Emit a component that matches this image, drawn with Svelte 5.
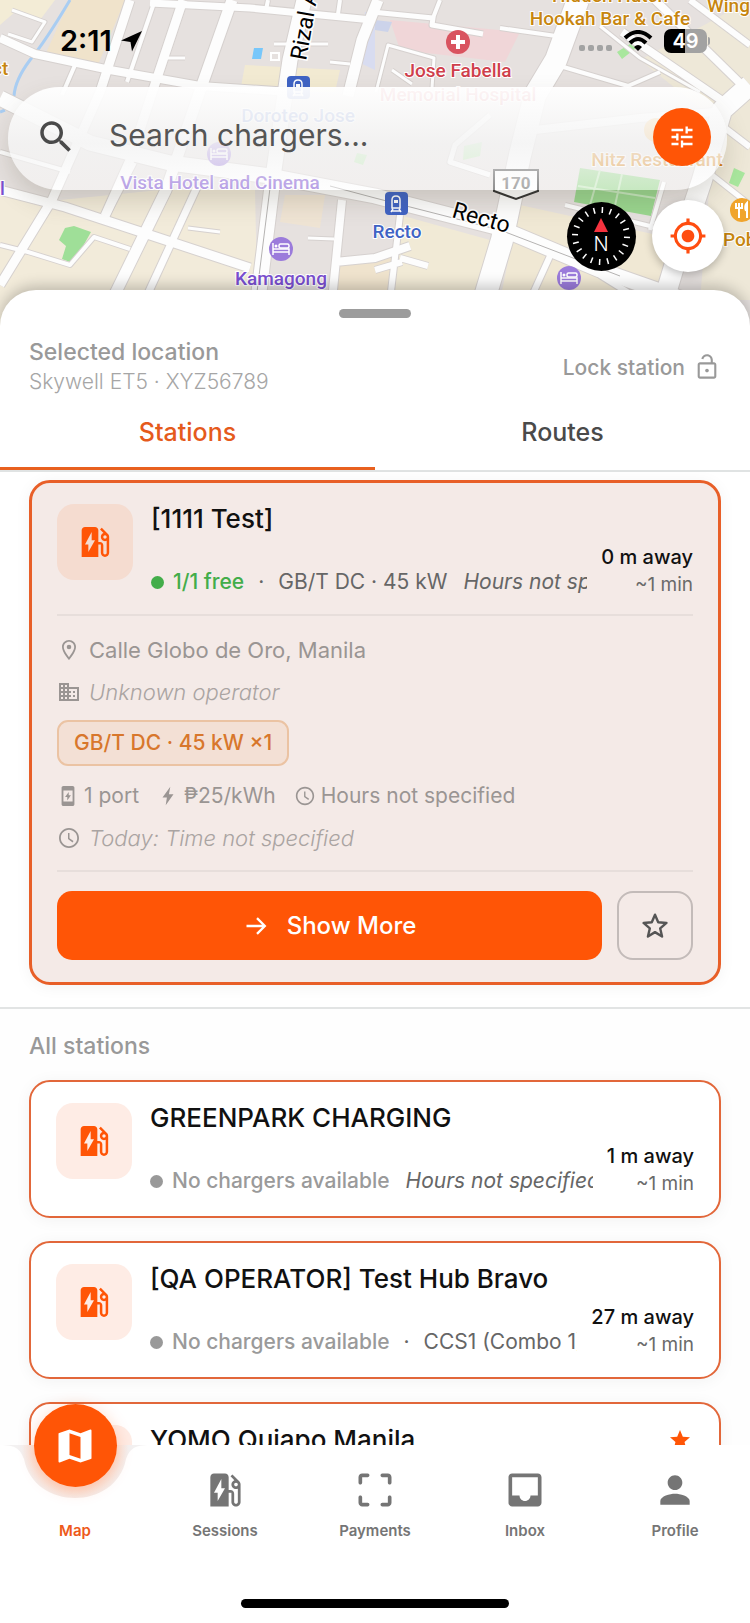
<script>
	const icons = {
		search: "M15.5 14h-.79l-.28-.27C15.41 12.59 16 11.11 16 9.5 16 5.91 13.09 3 9.5 3S3 5.91 3 9.5 5.91 16 9.5 16c1.61 0 3.09-.59 4.23-1.57l.27.28v.79l5 4.99L20.49 19l-4.99-5zm-6 0C7.01 14 5 11.99 5 9.5S7.01 5 9.5 5 14 7.01 14 9.5 11.99 14 9.5 14z",
		tune: "M3 17v2h6v-2H3zM3 5v2h10V5H3zm10 16v-2h8v-2h-8v-2h-2v6h2zM7 9v2H3v2h4v2h2V9H7zm14 4v-2H11v2h10zm-6-4h2V7h4V5h-4V3h-2v6z",
		locate: "M12 8c-2.21 0-4 1.79-4 4s1.79 4 4 4 4-1.79 4-4-1.79-4-4-4zm8.94 3A8.994 8.994 0 0 0 13 3.06V1h-2v2.06A8.994 8.994 0 0 0 3.06 11H1v2h2.06A8.994 8.994 0 0 0 11 20.94V23h2v-2.06A8.994 8.994 0 0 0 20.94 13H23v-2h-2.06zM12 19c-3.87 0-7-3.13-7-7s3.13-7 7-7 7 3.13 7 7-3.13 7-7 7z",
		lockOpen: "M12 16.600c.9 0 1.600-.7 1.600-1.600s-.7-1.600-1.600-1.600-1.600.7-1.600 1.600.7 1.600 1.600 1.600zM18 8h-1V6c0-2.760-2.240-5-5-5-2.400 0-4.400 1.600-4.900 3.900l1.800.4C9.200 3.900 10.500 2.800 12 2.800c1.770 0 3.200 1.430 3.200 3.200v2H6c-1.100 0-2 .9-2 2v10c0 1.100.9 2 2 2h12c1.100 0 2-.9 2-2V10c0-1.100-.9-2-2-2zm.2 12.200H5.800V9.800h12.400v10.400z",
		pump: "M19.77 7.23l.01-.01-3.72-3.72L15 4.56l2.11 2.11c-.94.36-1.61 1.26-1.61 2.33 0 1.38 1.12 2.5 2.5 2.5.36 0 .69-.08 1-.21v7.21c0 .55-.45 1-1 1s-1-.45-1-1V14c0-1.1-.9-2-2-2h-1V5c0-1.1-.9-2-2-2H6c-1.1 0-2 .9-2 2v16h10v-7.5h1.5v5c0 1.38 1.12 2.5 2.5 2.5s2.5-1.12 2.5-2.5V9c0-.69-.28-1.32-.73-1.77zM18 10c-.55 0-1-.45-1-1s.45-1 1-1 1 .45 1 1-.45 1-1 1zM8 18v-4.5H6L10 6v5h2l-4 7z",
		pin: "M12 2C8.13 2 5 5.13 5 9c0 5.25 7 13 7 13s7-7.75 7-13c0-3.87-3.13-7-7-7zM6.800 9c0-2.870 2.330-5.200 5.200-5.200s5.200 2.330 5.200 5.200c0 2.880-3.080 7.500-5.200 10.200C9.920 16.500 6.800 11.850 6.800 9zm5.200-2.300a2.300 2.300 0 1 0 0 4.600 2.300 2.300 0 0 0 0-4.600z",
		building: "M12 7V3H2v18h20V7H12zM6 19H4v-2h2v2zm0-4H4v-2h2v2zm0-4H4V9h2v2zm0-4H4V5h2v2zm4 12H8v-2h2v2zm0-4H8v-2h2v2zm0-4H8V9h2v2zm0-4H8V5h2v2zm10 12h-8v-2h2v-2h-2v-2h2v-2h-2V9h8v10zm-2-8h-2v2h2v-2zm0 4h-2v2h2v-2z",
		clock: "M12 2C6.500 2 2 6.500 2 12s4.500 10 10 10 10-4.500 10-10S17.500 2 12 2zm0 18.200c-4.530 0-8.200-3.670-8.200-8.200S7.470 3.800 12 3.800s8.200 3.670 8.200 8.200-3.670 8.200-8.200 8.200zM12.500 7H11v6l4.600 3.400.9-1.300-4-2.900z",
		port: "M17 1H7c-1.100 0-2 .9-2 2v18c0 1.100.9 2 2 2h10c1.100 0 2-.9 2-2V3c0-1.100-.9-2-2-2zm0 17H7V6h10v12zm-4.200-10.500L8.800 13h2.400v3.800l4-5.500h-2.400z",
		bolt: "M14.500 2L6 13.500h4.800L9.500 22 18 10h-5z",
		arrow: "M12.700 4.600l-1.400 1.400 5 5H3v2h13.300l-5 5 1.400 1.400L20.100 12z",
		star: "M12 17.27L18.18 21l-1.64-7.03L22 9.24l-7.19-.61L12 2 9.19 8.63 2 9.24l5.46 4.73L5.82 21z",
		map: "M20.5 3l-.16.03L15 5.1 9 3 3.36 4.9c-.21.07-.36.25-.36.48V20.5c0 .28.22.5.5.5l.16-.03L9 18.9l6 2.1 5.64-1.9c.21-.07.36-.25.36-.48V3.5c0-.28-.22-.5-.5-.5zM15 19l-6-2.11V5l6 2.11V19z",
		frame: "M3 5v3c0 1.300 2 1.300 2 0V5h3c1.300 0 1.300-2 0-2H5c-1.100 0-2 .9-2 2zm2 11c0-1.300-2-1.300-2 0v3c0 1.100.9 2 2 2h3c1.300 0 1.300-2 0-2H5v-3zm14 3h-3c-1.300 0-1.300 2 0 2h3c1.100 0 2-.9 2-2v-3c0-1.300-2-1.300-2 0v3zm0-16h-3c-1.300 0-1.300 2 0 2h3v3c0 1.300 2 1.300 2 0V5c0-1.100-.9-2-2-2z",
		inbox: "M19 3H4.990c-1.110 0-1.980.89-1.980 2L3 19c0 1.100.88 2 1.990 2H19c1.100 0 2-.9 2-2V5c0-1.110-.9-2-2-2zm0 12h-4c0 1.660-1.350 3-3 3s-3-1.340-3-3H4.990V5H19v10z",
		person: "M12 12c2.210 0 4-1.790 4-4s-1.790-4-4-4-4 1.790-4 4 1.790 4 4 4zm0 2c-2.670 0-8 1.340-8 4v2h16v-2c0-2.660-5.330-4-8-4z",
		send: "M22 2L1 11.500l9.500 1.500L12 22.500z",
	};

	// white streets, drawn with a grey casing below
	const streets = [
		{ d: "M0 38L35 54L110 70L200 86L290 92", w: 8 },
		{ d: "M130 0L100 92L52 200L0 285", w: 9 },
		{ d: "M155 0L127 82", w: 4 },
		{ d: "M183 0L155 84L130 160L105 216", w: 9 },
		{ d: "M232 0L202 85L166 190L112 300", w: 11 },
		{ d: "M75 65L62 95", w: 4 },
		{ d: "M12 10L45 22L32 42L8 34", w: 3 },
		{ d: "M150 3L250 8L372 20", w: 7 },
		{ d: "M0 190L65 207L150 235L250 268", w: 9 },
		{ d: "M133 162L105 216", w: 8 },
		{ d: "M198 185L145 300", w: 7 },
		{ d: "M0 245L28 252L70 265L94 237L130 249", w: 4 },
		{ d: "M0 152L70 172", w: 4 },
		{ d: "M188 228L220 232", w: 3 },
		{ d: "M342 200L332 300M335 262L375 258L410 246", w: 8 },
		{ d: "M308 238L334 239", w: 3 },
		{ d: "M274 44L328 44M165 58L185 58M330 62L350 64", w: 3 },
		{ d: "M340 0L338 14M268 0L266 10", w: 4 },
		{ d: "M378 0L362 40L348 96", w: 11 },
		{ d: "M372 12L433 18L432 25L483 34", w: 5 },
		{ d: "M500 28L556 36M440 0L433 18", w: 4 },
		{ d: "M376 92L388 45L434 58L432 88M392 70L412 84", w: 3 },
		{ d: "M560 66L628 86L660 72", w: 4 },
		{ d: "M622 32L724 102", w: 8 },
		{ d: "M655 0L745 88", w: 8 },
		{ d: "M690 0L750 45", w: 6 },
		{ d: "M600 26L640 58L700 92", w: 3 },
		{ d: "M490 115L455 145L450 162L490 175", w: 5 },
		{ d: "M535 130L640 118L715 112", w: 8 },
		{ d: "M725 128L750 147", w: 6 },
		{ d: "M712 175L750 205", w: 5 },
		{ d: "M565 205L650 226L682 240", w: 4 },
		{ d: "M664 182L650 230", w: 4 },
		{ d: "M400 215L390 300M400 258L428 266M375 270L402 262", w: 6 },
		{ d: "M550 256L530 300M640 300L600 275", w: 6 },
		{ d: "M0 98L90 143L170 163L270 176L375 196L500 228L600 270L700 305", w: 15 },
		{ d: "M304 0L290 60L274 170L258 300", w: 15 },
		{ d: "M578 0L556 60L535 95L520 155L502 240L484 300", w: 22 },
		{ d: "M750 85L722 110L702 180L682 240L664 300", w: 20 },
	];

	const ticks = Array.from({ length: 20 }, (_, i) => i * 18);

	const stations = [
		{ name: "GREENPARK CHARGING", connector: "", hours: "Hours not specified", distance: "1 m away", starred: false },
		{ name: "[QA OPERATOR] Test Hub Bravo", connector: "CCS1 (Combo 1)", hours: "", distance: "27 m away", starred: false },
		{ name: "YOMO Quiapo Manila", connector: "", hours: "Hours not specified", distance: "35 m away", starred: true },
	];

	const navItems = [
		{ label: "Map", icon: "map" },
		{ label: "Sessions", icon: "pump" },
		{ label: "Payments", icon: "frame" },
		{ label: "Inbox", icon: "inbox" },
		{ label: "Profile", icon: "person" },
	];

	let query = "";
	let activeTab = "stations";
	let activeNav = "Map";
	let favorite = false;
</script>

{#snippet icon(name, size)}
	<svg class="icon" width={size} height={size} viewBox="0 0 24 24" aria-hidden="true">
		<path d={icons[name]} fill="currentColor" fill-rule="evenodd" />
	</svg>
{/snippet}

{#snippet bed(x, y)}
	<g transform="translate({x} {y})">
		<circle r="12" fill="#9b7bdb" />
		<path d="M-8 -6V6M-8 3H8V6M8 3V0H-8" stroke="#fff" stroke-width="1.500" fill="none" />
		<rect x="-2" y="-5" width="10" height="4" rx="1.500" fill="none" stroke="#fff" stroke-width="1.500" />
		<circle cx="-5" cy="-3" r="1.500" fill="#fff" />
	</g>
{/snippet}

{#snippet train(x, y)}
	<g transform="translate({x} {y})">
		<rect x="-11" y="-11" width="23" height="23" rx="4" fill="#3f63c4" />
		<path d="M-4 5V-3Q-4 -7 0 -7T4 -3V5ZM-5 9L-3 6M5 9L3 6M-5 8H5" stroke="#fff" stroke-width="1.500" fill="none" />
		<path d="M-2 -3H2V0H-2Z" fill="#fff" />
	</g>
{/snippet}

{#snippet summary(s)}
	<div class="summary">
		<span class="tile">{@render icon("pump", 40)}</span>
		<div class="info">
			<h3>{s.name}</h3>
			<p class="status">
				<i class="dot" class:free={s.free}></i>
				<span class="avail" class:free={s.free}>{s.free || "No chargers available"}</span>
				{#if s.connector}
					<span class="sep">·</span>
					<span>{s.connector}</span>
				{/if}
				{#if s.hours}
					<em>{s.hours}</em>
				{/if}
			</p>
		</div>
		<div class="distance">
			{#if s.starred}
				<span class="starred">{@render icon("star", 24)}</span>
			{/if}
			<strong>{s.distance}</strong>
			<span>~1 min</span>
		</div>
	</div>
{/snippet}

<div class="app">
	<header class="top">
		<svg class="map" viewBox="0 0 750 330" preserveAspectRatio="xMidYMin slice" aria-hidden="true">
			<rect width="750" height="330" fill="#e6e1df" />
			<path d="M70 0H125L95 72L45 55Z" fill="#f0e3cb" />
			<path d="M0 0H55L40 20L15 12L0 25Z" fill="#f3ecd6" />
			<path d="M0 190L60 200L160 190H255L258 330H0Z" fill="#f2ebda" />
			<path d="M245 65L340 70L335 92H240Z" fill="#f2ead2" />
			<path d="M285 195H325L320 228L280 222Z" fill="#efe4d4" />
			<path d="M340 262L400 250L390 300H335Z" fill="#efe3cd" />
			<path d="M400 215L490 240L475 300H392Z" fill="#f1ead6" />
			<path d="M520 205L680 240L660 300H500Z" fill="#f0e8d4" />
			<path d="M640 60L750 0V300H700L715 120Z" fill="#eee8d8" />
			<path d="M390 20L520 32L505 62L400 50Z" fill="#f0d6d8" />
			<path d="M375 20L392 22L388 32L375 30Z" fill="#ccd3ea" />
			<path d="M365 12H375V70L358 62Z" fill="#d8dcf0" />
			<path d="M70 0Q45 42 30 60Q15 80 14 96M5 110L0 112" fill="none" stroke="#a9cdf2" stroke-width="3" />
			<path d="M65 228L74 226L91 232L82 248L70 262L62 259L66 246L59 240Z" fill="#9fdf98" />
			<path d="M580 168L660 180L651 216L574 202Z" fill="#9ad68f" />
			<path d="M600 170L590 205M622 174L614 210M578 186L655 198" stroke="#c6e8be" stroke-width="2" />
			<path d="M357 153L367 155L363 165L354 162ZM464 146L482 142L480 156L463 160Z" fill="#b9e6ae" />
			<path d="M617 52L630 44L636 48L622 59ZM734 168L745 173L738 187L729 183Z" fill="#a9e79e" />
			<path d="M254 48H263L261 59H252Z" fill="#78c7fa" />
			<g fill="none" stroke="#d6d1cf" stroke-linejoin="round">
				{#each streets as s}
					<path d={s.d} stroke-width={s.w + 2} />
				{/each}
			</g>
			<g fill="none" stroke="#fdfdfd" stroke-linejoin="round">
				{#each streets as s}
					<path d={s.d} stroke-width={s.w} />
				{/each}
			</g>
			<path d="M271 180L256 300M330 186L375 198L500 230L620 276" fill="none" stroke="#b5b3b2" stroke-width="1" />
			<rect x="271" y="53" width="8" height="7" fill="none" stroke="#fff" stroke-width="2" />

			{@render train(298, 87)}
			{@render train(396, 203)}
			{@render bed(219, 154)}
			{@render bed(281, 249)}
			{@render bed(569, 278)}
			<g transform="translate(458 42)">
				<circle r="12" fill="#d9535f" />
				<path d="M-7 0H7M0 -7V7" stroke="#fff" stroke-width="4" />
			</g>
			<circle cx="656" cy="130" r="12" fill="#f2a93a" />
			<g transform="translate(742 210)">
				<circle r="12" fill="#f0a42c" />
				<path d="M-3 8V-7M-6 -7V-2H0V-7M5 8V-7Q2 -4 4 1" stroke="#fff" stroke-width="2" fill="none" />
			</g>
			<g class="place" text-anchor="middle">
				<text x="281" y="285" fill="#7a4fd0">Kamagong</text>
				<text x="220" y="189" fill="#7a4fd0">Vista Hotel and Cinema</text>
				<text x="298" y="122" fill="#3f63c4">Doroteo Jose</text>
				<text x="397" y="238" fill="#3f63c4">Recto</text>
				<text x="458" y="77" fill="#cf3f4c">Jose Fabella</text>
				<text x="458" y="101" fill="#cf3f4c">Memorial Hospital</text>
				<text x="610" y="2" fill="#c7860f">Hidden Hutch</text>
				<text x="610" y="25" fill="#c7860f">Hookah Bar &amp; Cafe</text>
				<text x="657" y="166" fill="#d9820f">Nitz Restaurant</text>
			</g>
			<g class="place">
				<text x="707" y="12" fill="#c7860f">Wings</text>
				<text x="723" y="246" fill="#c7860f">Poblacion</text>
				<text x="-8" y="75" fill="#c7860f">ct</text>
				<text x="0" y="195" fill="#7a4fd0">l</text>
			</g>
			<g class="road">
				<text transform="translate(306 61) rotate(-80)">Rizal Avenue</text>
				<text transform="translate(451 217) rotate(16)">Recto</text>
			</g>
			<path d="M494 170H538V191L516 199L494 191Z" fill="#fff" stroke="#333" stroke-width="2" />
			<text class="shield" x="516" y="189" text-anchor="middle">170</text>
		</svg>

		<div class="statusbar">
			<span class="time">2:11 {@render icon("send", 24)}</span>
			<span class="signals">
				<i class="cell"></i><i class="cell"></i><i class="cell"></i><i class="cell"></i>
				<svg class="wifi" width="30" height="22" viewBox="0 0 30 22" aria-hidden="true">
					<path d="M2 8Q15 -4 28 8M7 13Q15 5 23 13" fill="none" stroke="#000" stroke-width="4" />
					<path d="M11 17Q15 13 19 17L15 21Z" />
				</svg>
				<span class="battery">49</span>
				<i class="battery-tip"></i>
			</span>
		</div>

		<form class="search" on:submit|preventDefault>
			<label for="query" aria-label="Search">{@render icon("search", 42)}</label>
			<input id="query" type="text" placeholder="Search chargers..." bind:value={query} />
			<button class="filter" type="button" aria-label="Filters">{@render icon("tune", 28)}</button>
		</form>

		<div class="map-controls">
			<button class="compass" type="button" aria-label="North up">
				<svg width="69" height="69" viewBox="-34 -34 69 69" aria-hidden="true">
					{#each ticks as angle}
						<path d="M0 -29V-23" stroke="#fff" stroke-width="1.500" transform="rotate({angle + 3})" />
					{/each}
					<path d="M0 -18L7 -4H-7Z" fill="#f5333f" />
					<text y="15" text-anchor="middle">N</text>
				</svg>
			</button>
			<button class="locate" type="button" aria-label="My location">{@render icon("locate", 38)}</button>
		</div>
	</header>

	<main class="sheet">
		<div class="handle"></div>
		<div class="location">
			<div>
				<h2>Selected location</h2>
				<p>Skywell ET5 · XYZ56789</p>
			</div>
			<button class="lock" type="button">Lock station {@render icon("lockOpen", 28)}</button>
		</div>
		<div class="tabs" role="tablist">
			<button role="tab" aria-selected={activeTab === "stations"} class:active={activeTab === "stations"} on:click={() => (activeTab = "stations")}>Stations</button>
			<button role="tab" aria-selected={activeTab === "routes"} class:active={activeTab === "routes"} on:click={() => (activeTab = "routes")}>Routes</button>
		</div>

		<section class="selected">
			<article class="card current">
				{@render summary({ name: "[1111 Test]", free: "1/1 free", connector: "GB/T DC · 45 kW", hours: "Hours not specified", distance: "0 m away" })}
				<div class="details">
					<p class="line">{@render icon("pin", 24)} Calle Globo de Oro, Manila</p>
					<p class="line muted">{@render icon("building", 24)} <em>Unknown operator</em></p>
					<span class="chip">GB/T DC · 45 kW ×1</span>
					<p class="facts">
						<span>{@render icon("port", 22)} 1 port</span>
						<span>{@render icon("bolt", 22)} ₱25/kWh</span>
						<span>{@render icon("clock", 22)} Hours not specified</span>
					</p>
					<p class="line muted">{@render icon("clock", 24)} <em>Today: Time not specified</em></p>
				</div>
				<div class="actions">
					<button class="more" type="button">{@render icon("arrow", 28)} Show More</button>
					<button class="fav" type="button" aria-label="Favorite" aria-pressed={favorite} on:click={() => (favorite = !favorite)}>
						<svg width="32" height="32" viewBox="0 0 24 24" aria-hidden="true">
							<path d="M12 3.500L14.400 9.200L20.600 9.700L15.900 13.800L17.300 19.900L12 16.600L6.700 19.900L8.100 13.800L3.400 9.700L9.600 9.200Z" fill={favorite ? "currentColor" : "none"} stroke="currentColor" stroke-width="1.800" stroke-linejoin="round" />
						</svg>
					</button>
				</div>
			</article>
		</section>

		<section class="all">
			<h2>All stations</h2>
			{#each stations as s}
				<article class="card">{@render summary(s)}</article>
			{/each}
		</section>
	</main>

	<nav class="bottom">
		<svg class="notch" width="150" height="56" viewBox="0 0 150 56" aria-hidden="true">
			<defs>
				<radialGradient id="glow" gradientUnits="userSpaceOnUse" cx="75" cy="4" r="54">
					<stop offset="0.750" stop-color="#fbe3d8" />
					<stop offset="1" stop-color="#f3f1f1" />
				</radialGradient>
			</defs>
			<path d="M0 0C16 0 20 4 24 14C34 66 116 66 126 14C130 4 134 0 150 0Z" fill="url(#glow)" />
		</svg>
		<div class="items">
			{#each navItems as item}
				<button type="button" class:active={activeNav === item.label} on:click={() => (activeNav = item.label)}>
					<span class="glyph">{@render icon(item.icon, 44)}</span>
					{item.label}
				</button>
			{/each}
		</div>
		<div class="home"></div>
	</nav>
</div>

<style>
	:global(body) {
		background: #fff;
	}
	.app {
		display: flex;
		flex-direction: column;
		height: 100vh;
		overflow: hidden;
		font-family: Inter, "Liberation Sans", sans-serif;
		color: #111;
	}
	.app * {
		box-sizing: border-box;
	}
	h2,
	h3,
	p {
		margin: 0;
		font-weight: 500;
	}
	button {
		display: flex;
		align-items: center;
		justify-content: center;
		padding: 0;
		border: none;
		background: none;
		font: inherit;
		color: inherit;
		cursor: pointer;
	}
	.icon {
		display: block;
		flex: none;
	}

	/* map */
	.top {
		position: relative;
		flex: none;
		height: 290px;
	}
	.map {
		position: absolute;
		top: 0;
		left: 0;
		width: 100%;
		height: 330px;
	}
	.place {
		font: 500 19px Roboto, sans-serif;
		stroke: #fff;
		stroke-width: 2px;
		paint-order: stroke;
	}
	.road {
		font: 400 23px Roboto, sans-serif;
		stroke: #fff;
		stroke-width: 3px;
		paint-order: stroke;
	}
	.shield {
		font: 700 17px Roboto, sans-serif;
		fill: #666;
	}
	.statusbar {
		position: relative;
		display: flex;
		justify-content: space-between;
		align-items: center;
		height: 87px;
		padding: 0 40px 6px 60px;
	}
	.time {
		display: flex;
		align-items: center;
		gap: 8px;
		font-size: 29px;
		font-weight: 600;
		color: #000;
	}
	.signals {
		display: flex;
		align-items: center;
		gap: 3px;
	}
	.cell {
		width: 6px;
		height: 6px;
		margin-top: 14px;
		border-radius: 2px;
		background: #a3a3a3;
	}
	.wifi {
		margin: 0 8px;
	}
	.battery {
		width: 43px;
		border-radius: 7px;
		background: linear-gradient(90deg, #000 49%, #a2a2a2 49%);
		font-size: 20px;
		line-height: 24px;
		font-weight: 600;
		text-align: center;
		color: #fff;
	}
	.battery-tip {
		width: 2px;
		height: 8px;
		margin-left: -2px;
		border-radius: 0 2px 2px 0;
		background: #a2a2a2;
	}
	.search {
		position: relative;
		display: flex;
		align-items: center;
		height: 103px;
		margin: 0 23px 0 8px;
		padding: 0 16px 4px 27px;
		border-radius: 52px;
		background: linear-gradient(rgba(255, 255, 255, 0.95), rgba(244, 244, 244, 0.85) 55%, rgba(255, 255, 255, 0.45));
		box-shadow: 0 12px 24px rgba(80, 70, 50, 0.18);
	}
	.search label {
		color: #4a4a4a;
	}
	.search input {
		flex: 1;
		min-width: 0;
		margin-left: 32px;
		padding: 0 0 4px;
		border: none;
		outline: none;
		background: none;
		font: 400 30px Inter, sans-serif;
		color: #333;
	}
	.search input::placeholder {
		color: #555;
		opacity: 1;
	}
	.filter {
		width: 58px;
		height: 58px;
		border-radius: 50%;
		background: #ff5506;
		color: #fff;
	}
	.map-controls {
		position: relative;
		display: flex;
		justify-content: flex-end;
		align-items: center;
		gap: 16px;
		padding: 10px 26px 0 0;
	}
	.compass {
		width: 69px;
		height: 69px;
		border-radius: 50%;
		background: #000;
	}
	.compass text {
		font: 300 20px Inter, sans-serif;
		fill: #fff;
	}
	.locate {
		width: 72px;
		height: 72px;
		border-radius: 50%;
		background: #fff;
		box-shadow: 0 3px 8px rgba(0, 0, 0, 0.25);
		color: #ff4d10;
	}

	/* sheet */
	.sheet {
		position: relative;
		flex: 1;
		min-height: 0;
		overflow: hidden;
		border-radius: 36px 36px 0 0;
		background: #fff;
		box-shadow: 0 -4px 14px rgba(0, 0, 0, 0.22);
	}
	.handle {
		width: 72px;
		height: 9px;
		margin: 19px auto 0;
		border-radius: 5px;
		background: #9c9c9c;
	}
	.location {
		display: flex;
		justify-content: space-between;
		align-items: center;
		padding: 19px 29px 0;
	}
	.location h2,
	.all h2 {
		font-size: 23px;
		line-height: 30px;
		color: #999;
	}
	.location p {
		font-size: 21px;
		line-height: 30px;
		font-weight: 300;
		color: #a6a6a6;
	}
	.lock {
		gap: 8px;
		font-size: 21px;
		font-weight: 500;
		color: #999;
	}
	.tabs {
		display: grid;
		grid-template-columns: 1fr 1fr;
		border-bottom: 2px solid #e0e3e3;
	}
	.tabs button {
		height: 73px;
		border-bottom: 3px solid transparent;
		font-size: 25px;
		font-weight: 500;
		color: #4a4a4a;
	}
	.tabs button.active {
		border-color: #e8601f;
		color: #e55a1c;
	}
	.selected {
		padding: 8px 29px 22px;
		border-bottom: 2px solid #e2e4e4;
	}
	.card {
		padding: 21px 25px 19px;
		border: 2px solid #e2673a;
		border-radius: 21px;
		background: #fff;
		box-shadow: 0 2px 16px rgba(0, 0, 30, 0.05);
	}
	.card.current {
		padding: 21px 25px 22px;
		border: 3px solid #e85f28;
		background: #f4eae7;
	}
	.summary {
		display: flex;
		gap: 14px;
		height: 94px;
	}
	.tile {
		display: flex;
		align-items: center;
		justify-content: center;
		flex: none;
		width: 76px;
		height: 76px;
		margin-right: 4px;
		border-radius: 17px;
		background: #feece5;
		color: #ff5506;
	}
	.current .tile {
		background: #f5dcd0;
	}
	.info {
		flex: 1;
		min-width: 0;
		display: flex;
		flex-direction: column;
		gap: 34px;
		overflow: hidden;
	}
	h3 {
		font-size: 26px;
		line-height: 30px;
		white-space: nowrap;
	}
	.status {
		display: flex;
		align-items: center;
		font-size: 21px;
		line-height: 28px;
		font-weight: 400;
		white-space: nowrap;
		color: #666;
	}
	.dot {
		flex: none;
		width: 13px;
		height: 13px;
		margin-right: 9px;
		border-radius: 50%;
		background: #999;
	}
	.dot.free {
		background: #43ad4a;
	}
	.avail {
		font-weight: 500;
		color: #9a9a9a;
	}
	.avail.free {
		color: #43ad4a;
	}
	.sep {
		margin: 0 14px;
	}
	.status em {
		margin-left: 16px;
	}
	.distance {
		display: flex;
		flex-direction: column;
		align-items: flex-end;
		justify-content: flex-end;
		flex: none;
		font-size: 19px;
		line-height: 27px;
		color: #6a6a6a;
	}
	.distance strong {
		font-size: 20px;
		font-weight: 500;
		color: #111;
	}
	.starred {
		margin-bottom: auto;
		padding: 3px 2px 0;
		color: #ff5506;
	}
	.details {
		display: flex;
		flex-direction: column;
		gap: 14px;
		margin-top: 16px;
		padding: 20px 0 18px;
		border-top: 2px solid #e7dedb;
		border-bottom: 2px solid #e7dedb;
		color: #9a9593;
	}
	.line {
		display: flex;
		align-items: center;
		gap: 8px;
		font-size: 22px;
		line-height: 28px;
		font-weight: 400;
	}
	.muted em {
		font-weight: 300;
		color: #aaa4a2;
	}
	.chip {
		align-self: flex-start;
		margin-bottom: 2px;
		padding: 0 15px;
		border: 2px solid #ebc3a3;
		border-radius: 11px;
		background: #f3e0d5;
		font-size: 21px;
		line-height: 42px;
		font-weight: 500;
		color: #d8772c;
	}
	.facts {
		display: flex;
		gap: 18px;
		font-size: 21px;
		line-height: 28px;
		font-weight: 400;
	}
	.facts span {
		display: flex;
		align-items: center;
		gap: 5px;
	}
	.actions {
		display: flex;
		gap: 15px;
		margin-top: 19px;
	}
	.more {
		flex: 1;
		gap: 16px;
		height: 69px;
		border-radius: 15px;
		background: #ff5506;
		font-size: 24px;
		font-weight: 500;
		color: #fff;
	}
	.fav {
		width: 76px;
		height: 69px;
		border: 2px solid #c3bbb9;
		border-radius: 16px;
		color: #555;
	}
	.all {
		display: flex;
		flex-direction: column;
		gap: 23px;
		padding: 22px 29px 0;
		background: #fefefe;
	}
	.all h2 {
		margin-bottom: -4px;
	}

	/* bottom navigation */
	.bottom {
		position: relative;
		flex: none;
		height: 178px;
		background: #fff;
	}
	.notch {
		position: absolute;
		top: 0;
		left: calc(10% - 75px);
	}
	.items {
		position: relative;
		display: grid;
		grid-template-columns: repeat(5, 1fr);
	}
	.items button {
		flex-direction: column;
		justify-content: flex-start;
		gap: 7px;
		padding-top: 23px;
		font-size: 15px;
		line-height: 24px;
		font-weight: 600;
		color: #757575;
	}
	.glyph {
		display: flex;
		align-items: center;
		justify-content: center;
		width: 83px;
		height: 44px;
	}
	.items .active {
		color: #ee5a1a;
	}
	.active .glyph {
		height: 83px;
		margin: -64px 0 25px;
		border-radius: 50%;
		background: #ff5506;
		box-shadow: 0 3px 16px rgba(255, 85, 6, 0.25);
		color: #fff;
	}
	.home {
		width: 268px;
		height: 9px;
		margin: 56px auto 0;
		border-radius: 5px;
		background: #000;
	}
</style>
